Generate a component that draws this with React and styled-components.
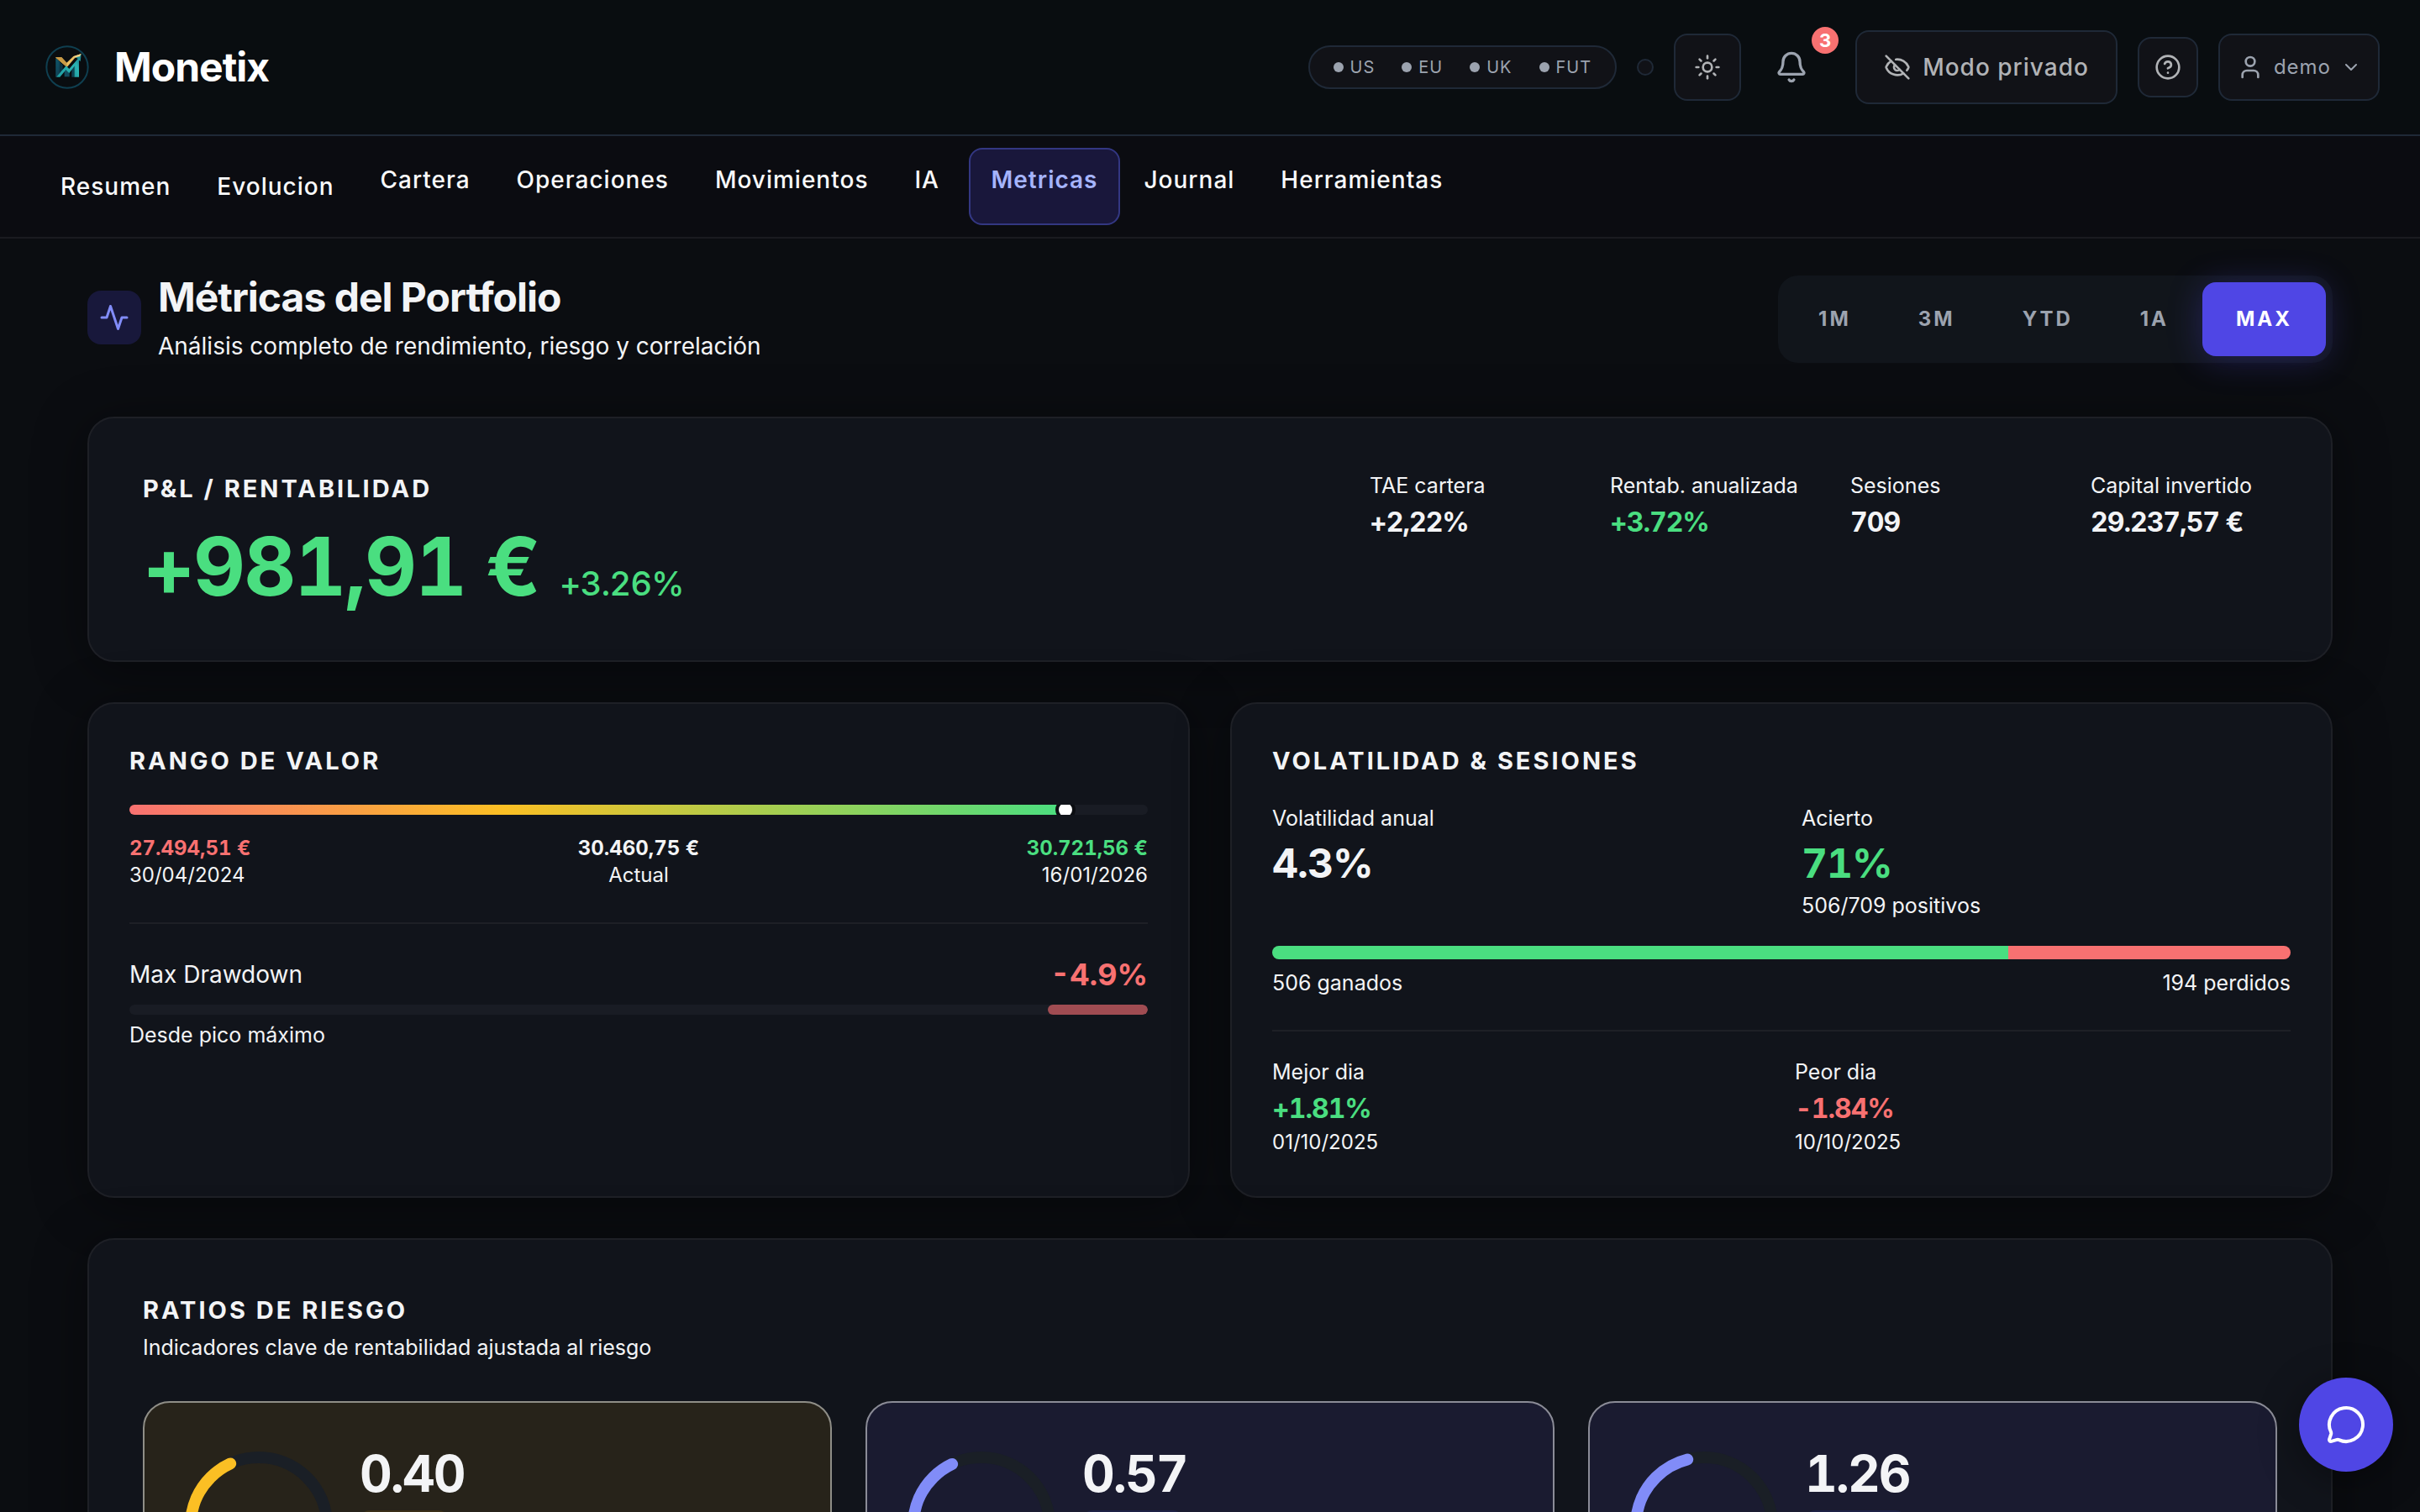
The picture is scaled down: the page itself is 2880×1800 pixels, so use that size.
import React, { useState } from "react";
import styled, { createGlobalStyle } from "styled-components";
import { Bell, ChevronDown, CircleHelp, EyeOff, MessageCircle, Sun, User } from "lucide-react";

const MARKETS = ["US", "EU", "UK", "FUT"];
const PERIODS = ["1M", "3M", "YTD", "1A", "MAX"];

const TABS = [
  { name: "Resumen", button: true },
  { name: "Evolucion", button: true },
  { name: "Cartera" },
  { name: "Operaciones" },
  { name: "Movimientos" },
  { name: "IA" },
  { name: "Metricas" },
  { name: "Journal" },
  { name: "Herramientas" },
];

const STATS = [
  { label: "TAE cartera", value: "+2,22%" },
  { label: "Rentab. anualizada", value: "+3.72%", tone: "green" },
  { label: "Sesiones", value: "709" },
  { label: "Capital invertido", value: "29.237,57 €" },
];

const RATIOS = [
  { value: "0.40", tone: "amber", fill: 0.408, tag: 106 },
  { value: "0.57", tone: "indigo", fill: 0.405, tag: 120 },
  { value: "1.26", tone: "indigo", fill: 0.447, tag: 120 },
];

const range = { min: 27494.51, now: 30460.75, max: 30721.56 };
const days = { won: 506, lost: 194 };

const colors = {
  text: "#f3f4f6",
  green: "#4ade80",
  red: "#f87171",
  amber: "#fbbf24",
  indigo: "#818cf8",
};

function Logo() {
  return (
    <svg width="64" height="64" viewBox="0 0 192 192" aria-hidden="true">
      <defs>
        <linearGradient id="teal" x1="0" y1="0" x2="1" y2="1">
          <stop offset="0" stopColor="#0e5a70" />
          <stop offset="1" stopColor="#10394a" />
        </linearGradient>
        <linearGradient id="arrow" x1="0" y1="1" x2="1" y2="0">
          <stop offset="0" stopColor="#1f9aa0" />
          <stop offset="0.6" stopColor="#2bb5b3" />
          <stop offset="1" stopColor="#1c7f8c" />
        </linearGradient>
      </defs>
      <circle cx="96" cy="96" r="74" fill="none" stroke="#0f3f50" strokeWidth="6" />
      <path d="M55 62 L71 78 V120 L55 132 Z" fill="url(#teal)" />
      <path d="M71 78 L80 88 V112 L71 120 Z" fill="#0b3444" />
      <path d="M86 108 H104 V130 H86 Z" fill="#124c5f" />
      <path d="M121 86 L138 66 V131 H121 Z" fill="url(#arrow)" />
      <path d="M112 98 L121 88 V131 H112 Z" fill="#0d4353" />
      <path d="M54 61 H76 L94 80 L118 57 L146 48 L137 62 L124 62 L95 96 Z" fill="#e9bd62" />
      <path d="M54 61 H76 L94 80 L95 96 Z" fill="#c99a45" />
      <path d="M57 131 L92 91 L103 102 L134 66 L126 60 L146 49 L143 75 L138 71 L103 117 L91 106 L70 131 Z" fill="url(#arrow)" />
      <path d="M118 58 L146 48 L141 58 L125 61 Z" fill="#f0d48a" />
    </svg>
  );
}

function Pulse() {
  return (
    <svg width="36" height="36" viewBox="0 0 24 24" fill="none" stroke="currentColor" strokeWidth="2" strokeLinecap="round" strokeLinejoin="round" aria-hidden="true">
      <polyline points="22 12 18 12 15 21 9 3 6 12 2 12" />
    </svg>
  );
}

// 270 degree gauge, starts at the bottom left
function Gauge({ fill, tone }) {
  const r = 81;
  const length = 2 * Math.PI * r;
  return (
    <GaugeSvg viewBox="0 0 176 176" aria-hidden="true">
      <circle cx="88" cy="88" r={r} stroke="#1a1f26" />
      <circle
        cx="88"
        cy="88"
        r={r}
        stroke={colors[tone]}
        strokeLinecap="round"
        strokeDasharray={`${length * 0.75 * fill} ${length}`}
        transform="rotate(135 88 88)"
      />
    </GaugeSvg>
  );
}

function App() {
  const [tab, setTab] = useState("Metricas");
  const [period, setPeriod] = useState("MAX");
  const position = ((range.now - range.min) / (range.max - range.min)) * 100;
  const won = (days.won / (days.won + days.lost)) * 100;

  return (
    <Shell>
      <GlobalStyle />
      <Header>
        <Brand href="#">
          <Logo />
          Monetix
        </Brand>
        <Tools>
          <Markets>
            {MARKETS.map((m) => (
              <Market key={m}>{m}</Market>
            ))}
          </Markets>
          <Status />
          <IconButton $size={80} aria-label="Cambiar tema">
            <Sun size={32} />
          </IconButton>
          <BellButton aria-label="Notificaciones">
            <Bell size={40} />
            <Badge>3</Badge>
          </BellButton>
          <PrivateButton>
            <EyeOff size={32} />
            Modo privado
          </PrivateButton>
          <IconButton $size={72} aria-label="Ayuda">
            <CircleHelp size={32} />
          </IconButton>
          <UserButton>
            <User size={32} />
            demo
            <ChevronDown size={24} />
          </UserButton>
        </Tools>
      </Header>

      <Nav>
        {TABS.map((t) => (
          <Tab
            key={t.name}
            as={t.button ? "button" : "a"}
            href={t.button ? undefined : "#"}
            $active={tab === t.name}
            onClick={() => setTab(t.name)}
          >
            {t.name}
          </Tab>
        ))}
      </Nav>

      <Main>
        <PageHead>
          <TitleGroup>
            <TitleIcon>
              <Pulse />
            </TitleIcon>
            <div>
              <Title>Métricas del Portfolio</Title>
              <Subtitle>Análisis completo de rendimiento, riesgo y correlación</Subtitle>
            </div>
          </TitleGroup>
          <Periods>
            {PERIODS.map((p) => (
              <Period key={p} $active={p === period} onClick={() => setPeriod(p)}>
                {p}
              </Period>
            ))}
          </Periods>
        </PageHead>

        <Sections>
          <Hero>
            <div>
              <CardTitle>P&L / RENTABILIDAD</CardTitle>
              <AmountRow>
                <Amount>+981,91 €</Amount>
                <AmountPct>+3.26%</AmountPct>
              </AmountRow>
            </div>
            <Stats>
              {STATS.map((s) => (
                <div key={s.label}>
                  <Label>{s.label}</Label>
                  <Value $tone={s.tone}>{s.value}</Value>
                </div>
              ))}
            </Stats>
          </Hero>

          <TwoCols>
            <Card>
              <CardTitle>RANGO DE VALOR</CardTitle>
              <RangeTrack>
                <RangeFill style={{ width: `${position}%` }} />
                <RangeMarker style={{ left: `${position}%` }} />
              </RangeTrack>
              <RangeLabels>
                <RangeLabel $tone="red">
                  <strong>27.494,51 €</strong>
                  <span>30/04/2024</span>
                </RangeLabel>
                <RangeLabel $align="center">
                  <strong>30.460,75 €</strong>
                  <span>Actual</span>
                </RangeLabel>
                <RangeLabel $tone="green" $align="right">
                  <strong>30.721,56 €</strong>
                  <span>16/01/2026</span>
                </RangeLabel>
              </RangeLabels>
              <Divider />
              <DrawdownRow>
                <span>Max Drawdown</span>
                <DrawdownValue>-4.9%</DrawdownValue>
              </DrawdownRow>
              <DrawdownTrack>
                <DrawdownFill style={{ width: "9.8%" }} />
              </DrawdownTrack>
              <Note>Desde pico máximo</Note>
            </Card>

            <Card>
              <CardTitle>VOLATILIDAD & SESIONES</CardTitle>
              <VolGrid>
                <div>
                  <Label>Volatilidad anual</Label>
                  <BigValue>4.3%</BigValue>
                </div>
                <div>
                  <Label>Acierto</Label>
                  <BigValue $tone="green">71%</BigValue>
                  <ValueNote>506/709 positivos</ValueNote>
                </div>
              </VolGrid>
              <WinBar>
                <WinPart $tone="green" style={{ width: `${won}%` }} />
                <WinPart $tone="red" style={{ width: `${100 - won}%` }} />
              </WinBar>
              <WinLabels>
                <span>506 ganados</span>
                <span>194 perdidos</span>
              </WinLabels>
              <Divider />
              <DayGrid>
                <div>
                  <Label>Mejor dia</Label>
                  <Value $tone="green">+1.81%</Value>
                  <ValueDate>01/10/2025</ValueDate>
                </div>
                <div>
                  <Label>Peor dia</Label>
                  <Value $tone="red">-1.84%</Value>
                  <ValueDate>10/10/2025</ValueDate>
                </div>
              </DayGrid>
            </Card>
          </TwoCols>

          <WideCard>
            <CardTitle>RATIOS DE RIESGO</CardTitle>
            <Note>Indicadores clave de rentabilidad ajustada al riesgo</Note>
            <Ratios>
              {RATIOS.map((r) => (
                <Ratio key={r.value} $tone={r.tone}>
                  <Gauge fill={r.fill} tone={r.tone} />
                  <RatioBody>
                    <RatioValue>{r.value}</RatioValue>
                    <Tag $tone={r.tone} $width={r.tag} />
                  </RatioBody>
                </Ratio>
              ))}
            </Ratios>
          </WideCard>
        </Sections>
      </Main>

      <ChatButton aria-label="Abrir chat">
        <MessageCircle size={48} />
      </ChatButton>
    </Shell>
  );
}
export default App;

const GlobalStyle = createGlobalStyle`
  * {
    box-sizing: border-box;
  }
  body {
    margin: 0;
    background: #0b0d11;
    color: ${colors.text};
    font-family: Inter, "Liberation Sans", sans-serif;
    font-size: 28px;
    line-height: 40px;
  }
  button {
    font: inherit;
    color: inherit;
    border: none;
    background: none;
    cursor: pointer;
  }
  a {
    color: inherit;
    text-decoration: none;
  }
  svg {
    flex-shrink: 0;
  }
`;

const Shell = styled.div`
  display: flex;
  flex-direction: column;
  height: 100vh;
  overflow: hidden;
`;

const Header = styled.header`
  display: flex;
  align-items: center;
  justify-content: space-between;
  flex-shrink: 0;
  min-height: 162px;
  padding: 0 48px;
  background: #090d10;
  border-bottom: 2px solid #1f2937;
`;

const Brand = styled.a`
  display: flex;
  align-items: center;
  gap: 24px;
  color: #fff;
  font-size: 48px;
  font-weight: 700;
  letter-spacing: -1px;
`;

const Tools = styled.div`
  display: flex;
  align-items: center;
  gap: 24px;
`;

const Markets = styled.div`
  display: flex;
  align-items: center;
  gap: 32px;
  height: 52px;
  padding: 0 28px;
  border: 2px solid #1f2937;
  border-radius: 26px;
  background: #111217;
`;

const Market = styled.span`
  display: flex;
  align-items: center;
  gap: 8px;
  color: #9ca3af;
  font-size: 20px;
  letter-spacing: 1px;

  &::before {
    content: "";
    width: 12px;
    height: 12px;
    border-radius: 50%;
    background: #9ca3af;
  }
`;

const Status = styled.span`
  width: 20px;
  height: 20px;
  border: 2px solid #1f2937;
  border-radius: 50%;
  background: #111217;
`;

const ToolButton = styled.button`
  display: flex;
  align-items: center;
  justify-content: center;
  padding: 0;
  border: 2px solid #1f2937;
  border-radius: 16px;
  background: #111217;
  color: #b1b3b6;
`;

const IconButton = styled(ToolButton)`
  width: ${({ $size }) => $size}px;
  height: ${({ $size }) => $size}px;
`;

const BellButton = styled.button`
  position: relative;
  display: flex;
  align-items: center;
  justify-content: center;
  width: 72px;
  height: 72px;
  margin-right: 16px;
  padding: 0;
  color: #9ca3af;
`;

const Badge = styled.span`
  position: absolute;
  top: -12px;
  right: -20px;
  width: 32px;
  height: 32px;
  border-radius: 50%;
  background: ${colors.red};
  color: #fff;
  font-size: 22px;
  font-weight: 700;
  line-height: 32px;
`;

const PrivateButton = styled(ToolButton)`
  gap: 14px;
  height: 88px;
  padding: 0 32px;
  font-weight: 500;
  letter-spacing: 1px;
`;

const UserButton = styled(ToolButton)`
  gap: 12px;
  height: 80px;
  padding: 0 20px;
  color: #9ca3af;
  font-size: 24px;
  letter-spacing: 1px;
`;

const Nav = styled.nav`
  display: flex;
  flex-shrink: 0;
  gap: 3px;
  padding: 14px 46px;
  background: #0b0c11;
  border-bottom: 2px solid #1a1b20;
`;

const Tab = styled.a`
  min-width: 88px;
  min-height: 92px;
  padding: 16px 24px;
  border: 2px solid ${({ $active }) => ($active ? "#333782" : "transparent")};
  border-radius: 16px;
  background: ${({ $active }) => ($active ? "#19173b" : "transparent")};
  color: ${({ $active }) => ($active ? "#a5b4fc" : "#f9fafb")};
  font-weight: ${({ $active }) => ($active ? 600 : 500)};
  letter-spacing: 1px;
`;

const Main = styled.main`
  padding: 40px 104px 0;
`;

const PageHead = styled.div`
  display: flex;
  align-items: flex-end;
  justify-content: space-between;
`;

const TitleGroup = styled.div`
  display: flex;
  align-items: center;
  gap: 20px;
`;

const TitleIcon = styled.span`
  display: flex;
  align-items: center;
  justify-content: center;
  width: 64px;
  height: 64px;
  border-radius: 16px;
  background: #18183b;
  color: ${colors.indigo};
`;

const Title = styled.h1`
  margin: 0 0 8px;
  font-size: 48px;
  font-weight: 700;
  line-height: 60px;
  letter-spacing: -1px;
`;

const Subtitle = styled.p`
  margin: 0;
`;

const Periods = styled.div`
  display: flex;
  padding: 8px;
  border-radius: 24px;
  background: #11151b;
`;

const Period = styled.button`
  height: 88px;
  padding: 0 40px;
  border-radius: 16px;
  background: ${({ $active }) => ($active ? "#4f46e5" : "transparent")};
  box-shadow: ${({ $active }) => ($active ? "0 4px 40px rgba(79, 70, 229, 0.3)" : "none")};
  color: ${({ $active }) => ($active ? "#fff" : "#9ca3af")};
  font-size: 24px;
  font-weight: 700;
  letter-spacing: 3px;
`;

const Sections = styled.div`
  display: grid;
  gap: 48px;
  margin-top: 64px;
`;

const Card = styled.section`
  padding: 48px;
  border: 2px solid #1e2026;
  border-radius: 32px;
  background: #11141b;
  box-shadow: 0 8px 64px rgba(0, 0, 0, 0.4);
`;

const WideCard = styled(Card)`
  padding: 64px;
`;

const Hero = styled(WideCard)`
  display: grid;
  grid-template-columns: minmax(0, 13fr) minmax(0, 10fr);
  gap: 56px;
`;

const CardTitle = styled.h2`
  margin: 0;
  font-size: 29px;
  font-weight: 700;
  line-height: 40px;
  letter-spacing: 3px;
`;

const AmountRow = styled.div`
  display: flex;
  align-items: baseline;
  gap: 24px;
  margin-top: 24px;
  color: ${colors.green};
  font-variant-numeric: tabular-nums;
`;

const Amount = styled.span`
  font-size: 96px;
  font-weight: 700;
  line-height: 96px;
  letter-spacing: -2px;
`;

const AmountPct = styled.span`
  font-size: 40px;
  font-weight: 500;
  letter-spacing: -1px;
`;

const Stats = styled.div`
  display: grid;
  grid-template-columns: repeat(4, minmax(0, 1fr));
  gap: 64px;
`;

const SmallText = styled.div`
  font-size: 25px;
  line-height: 32px;
`;

const Label = styled(SmallText)`
  margin-bottom: 8px;
  white-space: nowrap;
`;

const Note = styled(SmallText)`
  margin-top: 8px;
`;

const ValueNote = styled(SmallText)`
  margin-top: 4px;
`;

const ValueDate = styled(ValueNote)`
  font-size: 24px;
`;

const Value = styled.div`
  color: ${({ $tone }) => colors[$tone || "text"]};
  font-size: 32px;
  font-weight: 700;
  line-height: 40px;
  letter-spacing: -1px;
  font-variant-numeric: tabular-nums;
  white-space: nowrap;
`;

const BigValue = styled(Value)`
  font-size: 48px;
  line-height: 60px;
`;

const TwoCols = styled.div`
  display: grid;
  grid-template-columns: 1fr 1fr;
  gap: 48px;
`;

const Track = styled.div`
  position: relative;
  height: 12px;
  border-radius: 6px;
  background: #191c24;
  overflow: hidden;
`;

const RangeTrack = styled(Track)`
  margin-top: 32px;
`;

const RangeFill = styled.div`
  height: 100%;
  background: linear-gradient(90deg, ${colors.red}, ${colors.amber} 40%, ${colors.green});
`;

const RangeMarker = styled.span`
  position: absolute;
  top: 50%;
  width: 24px;
  height: 24px;
  border: 4px solid #0b0d11;
  border-radius: 50%;
  background: #fff;
  transform: translate(-50%, -50%);
`;

const RangeLabels = styled.div`
  display: flex;
  justify-content: space-between;
  margin-top: 24px;
`;

const RangeLabel = styled.div`
  display: flex;
  flex-direction: column;
  font-size: 24px;
  line-height: 32px;
  text-align: ${({ $align }) => $align || "left"};

  strong {
    color: ${({ $tone }) => colors[$tone || "text"]};
    font-weight: 700;
    font-variant-numeric: tabular-nums;
  }
`;

const Divider = styled.hr`
  height: 2px;
  margin: 40px 0 0;
  border: none;
  background: #1e2026;
`;

const DrawdownRow = styled.div`
  display: flex;
  align-items: center;
  justify-content: space-between;
  margin-top: 40px;
`;

const DrawdownValue = styled.span`
  color: ${colors.red};
  font-size: 36px;
  font-weight: 700;
  font-variant-numeric: tabular-nums;
`;

const DrawdownTrack = styled(Track)`
  display: flex;
  justify-content: flex-end;
  margin-top: 16px;
`;

const DrawdownFill = styled.div`
  border-radius: 6px;
  background: #a04c52;
`;

const VolGrid = styled.div`
  display: grid;
  grid-template-columns: 1fr 1fr;
  gap: 48px;
  margin-top: 32px;
`;

const WinBar = styled.div`
  display: flex;
  height: 16px;
  margin-top: 32px;
  border-radius: 8px;
  overflow: hidden;
`;

const WinPart = styled.div`
  background: ${({ $tone }) => colors[$tone]};
`;

const WinLabels = styled.div`
  display: flex;
  justify-content: space-between;
  margin-top: 12px;
  font-size: 25px;
  line-height: 32px;
`;

const DayGrid = styled.div`
  display: grid;
  grid-template-columns: 1fr 1fr;
  gap: 32px;
  margin-top: 32px;
`;

const Ratios = styled.div`
  display: grid;
  grid-template-columns: repeat(3, 1fr);
  gap: 40px;
  margin-top: 48px;
`;

const Ratio = styled.article`
  display: flex;
  align-items: center;
  gap: 32px;
  padding: 48px;
  border: 2px solid ${({ $tone }) => ($tone === "amber" ? "#8f8e87" : "#8b8c97")};
  border-radius: 32px;
  background: ${({ $tone }) => ($tone === "amber" ? "#27231a" : "#1a1b30")};
`;

const GaugeSvg = styled.svg`
  width: 176px;
  height: 176px;
  fill: none;
  stroke-width: 14px;
`;

const RatioBody = styled.div`
  min-height: 196px;
`;

const RatioValue = styled.div`
  font-size: 60px;
  font-weight: 700;
  line-height: 72px;
  letter-spacing: -2px;
  font-variant-numeric: tabular-nums;
`;

const Tag = styled.div`
  width: ${({ $width }) => $width}px;
  height: 40px;
  margin-top: 8px;
  border-radius: 12px;
  background: ${({ $tone }) => ($tone === "amber" ? "#3a2f18" : "#1e2145")};
`;

const ChatButton = styled.button`
  position: fixed;
  right: 32px;
  bottom: 48px;
  display: flex;
  align-items: center;
  justify-content: center;
  width: 112px;
  height: 112px;
  padding: 0;
  border-radius: 50%;
  background: #4f46e5;
  box-shadow: 0 8px 48px rgba(0, 0, 0, 0.4);
  color: #fff;
`;
